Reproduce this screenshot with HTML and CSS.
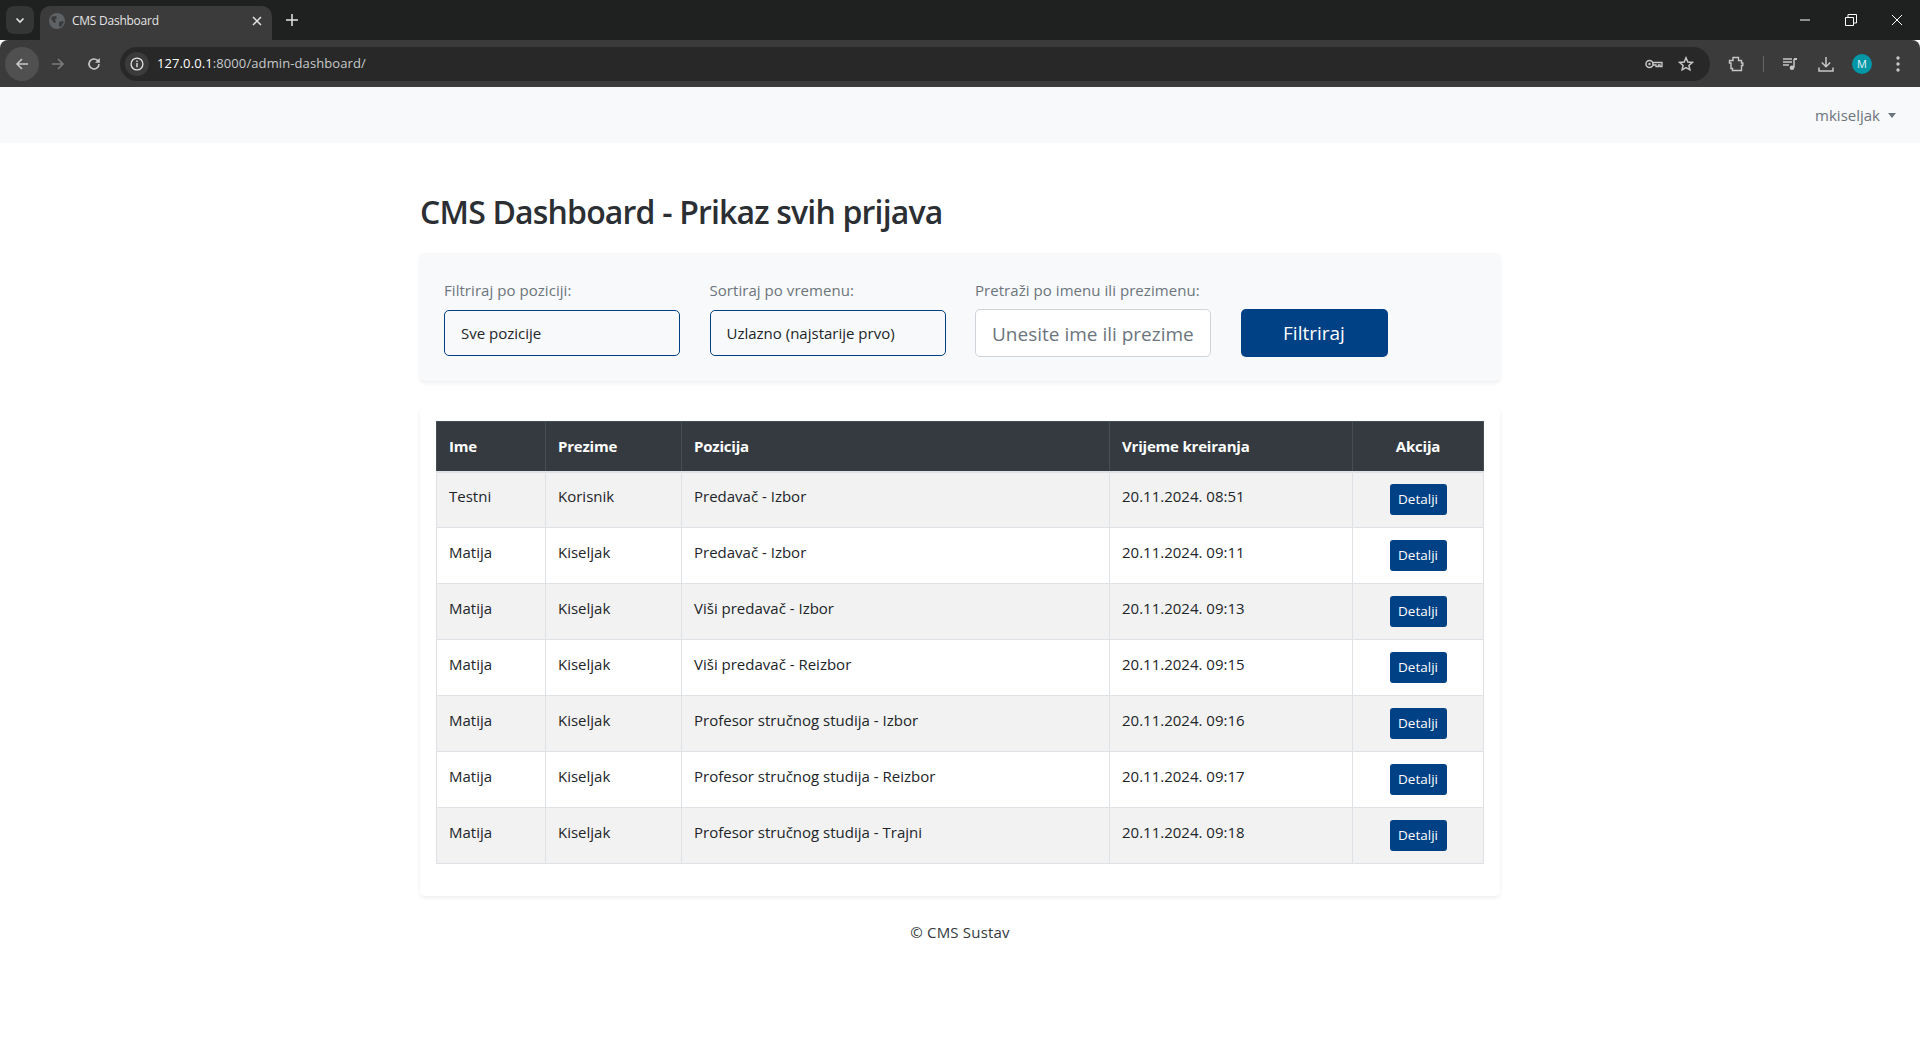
FILE: index.html

```html
<!DOCTYPE html>
<html lang="hr">
<head>
    <meta charset="UTF-8">
    <title>CMS Dashboard</title>
    <link rel="stylesheet" href="styles.css">
</head>
<body>
<div class="browser">
    <div class="tabbar">
        <div class="tab-search">
            <svg width="12" height="12" viewBox="0 0 12 12"><path d="M2.5 4.500 6 8l3.500-3.500" fill="none" stroke="#e3e3e3" stroke-width="1.600"/></svg>
        </div>
        <div class="tab">
            <svg class="favicon" width="16" height="16" viewBox="0 0 16 16"><circle cx="8" cy="8" r="8" fill="#5f6265"/><path d="M3 3.500 7 3l1 2-2 1.500 1 2.500-2 1-3-4zM10 9l3.500-1 1.500 1-3 5-2-1z" fill="#3b3b3b"/></svg>
            <span class="tab-title">CMS Dashboard</span>
            <svg class="tab-close" width="10" height="10" viewBox="0 0 10 10"><path d="M1 1l8 8M9 1l-8 8" stroke="#e3e3e3" stroke-width="1.500"/></svg>
        </div>
        <svg class="new-tab" width="14" height="14" viewBox="0 0 14 14"><path d="M7 1v12M1 7h12" stroke="#e3e3e3" stroke-width="1.500"/></svg>
        <div class="window-btns">
            <svg width="12" height="12" viewBox="0 0 12 12"><path d="M1 6h10" stroke="#fff" stroke-width="1"/></svg>
            <svg width="12" height="12" viewBox="0 0 12 12"><path d="M.5 3.500h8v8h-8zM3 3.500V.5h8.500V9H8.500" fill="none" stroke="#fff" stroke-width="1"/></svg>
            <svg width="12" height="12" viewBox="0 0 12 12"><path d="M1 1l10 10M11 1 1 11" stroke="#fff" stroke-width="1"/></svg>
        </div>
    </div>
    <div class="toolbar">
        <div class="nav-btn nav-back">
            <svg width="16" height="16" viewBox="0 0 16 16"><path d="M14 8H3M8 3 3 8l5 5" fill="none" stroke="#c7c7c7" stroke-width="1.600"/></svg>
        </div>
        <div class="nav-btn">
            <svg width="16" height="16" viewBox="0 0 16 16"><path d="M2 8h11M8 3l5 5-5 5" fill="none" stroke="#7b7b7b" stroke-width="1.600"/></svg>
        </div>
        <div class="nav-btn">
            <svg width="16" height="16" viewBox="0 0 16 16"><path d="M13 8a5 5 0 1 1-1.500-3.600L13 6" fill="none" stroke="#c7c7c7" stroke-width="1.600"/><path d="M13.800 2v4.800H9z" fill="#c7c7c7"/></svg>
        </div>
        <div class="omnibox">
            <div class="site-info">
                <svg width="14" height="14" viewBox="0 0 14 14"><circle cx="7" cy="7" r="5.900" fill="none" stroke="#e3e3e3" stroke-width="1.300"/><path d="M7 6v4.200M7 3.600v1.300" stroke="#e3e3e3" stroke-width="1.400"/></svg>
            </div>
            <span class="url"><span class="url-host">127.0.0.1</span>:8000/admin-dashboard/</span>
            <svg class="omni-key" width="18" height="12" viewBox="0 0 18 12"><circle cx="4.500" cy="6" r="3.500" fill="none" stroke="#c7c7c7" stroke-width="1.500"/><circle cx="4.500" cy="6" r="1.200" fill="#c7c7c7"/><path d="M8 4.500h9v4h-2V7h-1.500v1.500H11V7H8" fill="none" stroke="#c7c7c7" stroke-width="1.300"/></svg>
            <svg class="omni-star" width="16" height="16" viewBox="0 0 16 16"><path d="m8 1.800 1.800 4.200 4.500.4-3.400 3 1 4.400L8 11.500l-3.900 2.300 1-4.400-3.400-3 4.500-.4z" fill="none" stroke="#c7c7c7" stroke-width="1.500"/></svg>
        </div>
        <svg class="tool-icon tool-ext" width="16" height="16" viewBox="0 0 16 16"><path d="M1.500 4.500H5V1.500h5.500v3h3V7h1.300v2.500h-1.300v5h-9v-2H3V7H1.500z" fill="none" stroke="#c7c7c7" stroke-width="1.400"/></svg>
        <div class="tool-sep"></div>
        <svg class="tool-icon tool-media" width="16" height="16" viewBox="0 0 16 16"><path d="M1 3h9M1 6h9M1 9h6" stroke="#c7c7c7" stroke-width="1.400"/><path d="M12 3v8.500" stroke="#c7c7c7" stroke-width="1.500"/><path d="M12 2h3v2h-3z" fill="#c7c7c7"/><circle cx="10" cy="11.800" r="2.300" fill="#c7c7c7"/></svg>
        <svg class="tool-icon tool-dl" width="16" height="16" viewBox="0 0 16 16"><path d="M8 1v9.500M3.800 6.500 8 10.700l4.200-4.200M1 11.500V15h14v-3.500" fill="none" stroke="#c7c7c7" stroke-width="1.500"/></svg>
        <div class="avatar">M</div>
        <svg class="tool-icon tool-menu" width="4" height="16" viewBox="0 0 4 16"><circle cx="2" cy="2" r="1.700" fill="#c7c7c7"/><circle cx="2" cy="8" r="1.700" fill="#c7c7c7"/><circle cx="2" cy="14" r="1.700" fill="#c7c7c7"/></svg>
    </div>
</div>

<nav class="navbar">
    <a class="user-link" href="#">mkiseljak<span class="caret"></span></a>
</nav>

<main class="container">
    <h1>CMS Dashboard - Prikaz svih prijava</h1>

    <form class="filter-card">
        <div class="field">
            <label>Filtriraj po poziciji:</label>
            <div class="select-box">Sve pozicije</div>
        </div>
        <div class="field">
            <label>Sortiraj po vremenu:</label>
            <div class="select-box">Uzlazno (najstarije prvo)</div>
        </div>
        <div class="field">
            <label>Pretraži po imenu ili prezimenu:</label>
            <input class="search-input" type="text" placeholder="Unesite ime ili prezime">
        </div>
        <button class="btn-filter" type="button">Filtriraj</button>
    </form>

    <div class="table-card">
        <table>
            <thead>
                <tr>
                    <th class="col-ime">Ime</th>
                    <th class="col-prezime">Prezime</th>
                    <th class="col-pozicija">Pozicija</th>
                    <th class="col-vrijeme">Vrijeme kreiranja</th>
                    <th class="col-akcija">Akcija</th>
                </tr>
            </thead>
            <tbody>
                <tr><td>Testni</td><td>Korisnik</td><td>Predavač - Izbor</td><td>20.11.2024. 08:51</td><td class="cell-action"><a class="btn-details" href="#">Detalji</a></td></tr>
                <tr><td>Matija</td><td>Kiseljak</td><td>Predavač - Izbor</td><td>20.11.2024. 09:11</td><td class="cell-action"><a class="btn-details" href="#">Detalji</a></td></tr>
                <tr><td>Matija</td><td>Kiseljak</td><td>Viši predavač - Izbor</td><td>20.11.2024. 09:13</td><td class="cell-action"><a class="btn-details" href="#">Detalji</a></td></tr>
                <tr><td>Matija</td><td>Kiseljak</td><td>Viši predavač - Reizbor</td><td>20.11.2024. 09:15</td><td class="cell-action"><a class="btn-details" href="#">Detalji</a></td></tr>
                <tr><td>Matija</td><td>Kiseljak</td><td>Profesor stručnog studija - Izbor</td><td>20.11.2024. 09:16</td><td class="cell-action"><a class="btn-details" href="#">Detalji</a></td></tr>
                <tr><td>Matija</td><td>Kiseljak</td><td>Profesor stručnog studija - Reizbor</td><td>20.11.2024. 09:17</td><td class="cell-action"><a class="btn-details" href="#">Detalji</a></td></tr>
                <tr><td>Matija</td><td>Kiseljak</td><td>Profesor stručnog studija - Trajni</td><td>20.11.2024. 09:18</td><td class="cell-action"><a class="btn-details" href="#">Detalji</a></td></tr>
            </tbody>
        </table>
    </div>

    <footer class="page-footer">© CMS Sustav</footer>
</main>
</body>
</html>
```

FILE: styles.css

```css
* {
    box-sizing: border-box;
}

html, body {
    margin: 0;
    padding: 0;
}

body {
    height: 1037px;
    overflow: hidden;
    background: #fff;
    color: #212529;
    font-family: "Open Sans", "Noto Sans", sans-serif;
    font-size: 15px;
}

/* browser chrome */
.browser {
    height: 87px;
}

.tabbar {
    height: 40px;
    background: #1f2020;
    display: flex;
    align-items: flex-start;
}

.tab-search {
    width: 28px;
    height: 28px;
    margin: 6px 0 0 6px;
    background: #343535;
    border-radius: 8px;
    display: flex;
    align-items: center;
    justify-content: center;
}

.tab {
    width: 232px;
    height: 34px;
    margin: 6px 0 0 6px;
    background: #3b3b3b;
    border-radius: 10px 10px 0 0;
    display: flex;
    align-items: center;
    padding: 0 10px 5px 9px;
}

.favicon {
    flex: none;
}

.tab-title {
    flex: 1;
    margin-left: 7px;
    color: #e3e3e3;
    font-size: 12px;
    letter-spacing: -0.25px;
}

.new-tab {
    margin: 13px 0 0 13px;
}

.window-btns {
    margin-left: auto;
    margin-top: 14px;
    display: flex;
    gap: 34px;
    padding-right: 17px;
}

.toolbar {
    height: 47px;
    background: #3b3b3b;
    border-radius: 8px 8px 0 0;
    display: flex;
    align-items: center;
    padding-left: 5px;
}

.nav-btn {
    width: 34px;
    height: 34px;
    margin-right: 2px;
    border-radius: 50%;
    display: flex;
    align-items: center;
    justify-content: center;
}

.nav-back {
    background: #505050;
}

.omnibox {
    width: 1590px;
    height: 34px;
    margin-left: 7px;
    background: #282828;
    border-radius: 17px;
    display: flex;
    align-items: center;
    padding-left: 5px;
}

.site-info {
    width: 24px;
    height: 24px;
    background: #3b3b3b;
    border-radius: 50%;
    display: flex;
    align-items: center;
    justify-content: center;
}

.url {
    margin-left: 8px;
    padding-bottom: 1px;
    color: #c7cacc;
    font-size: 13px;
    letter-spacing: 0.1px;
}

.url-host {
    color: #fff;
}

.omni-key {
    margin-left: auto;
}

.omni-star {
    margin: 0 16px 0 15px;
}

.tool-ext {
    margin-left: 18px;
}

.tool-sep {
    width: 1px;
    height: 16px;
    margin-left: 19px;
    background: #666;
}

.tool-media {
    margin-left: 18px;
}

.tool-dl {
    margin-left: 20px;
}

.avatar {
    width: 20px;
    height: 20px;
    margin-left: 18px;
    border-radius: 50%;
    background: #0097a7;
    color: #e8f4f6;
    font-size: 11px;
    display: flex;
    align-items: center;
    justify-content: center;
}

.tool-menu {
    margin-left: 24px;
}

/* page */
.navbar {
    height: 56px;
    background: #f8f9fa;
    display: flex;
    align-items: center;
    justify-content: flex-end;
    padding-right: 24px;
}

.user-link {
    color: #6c757d;
    text-decoration: none;
    font-size: 15px;
    display: flex;
    align-items: center;
}

.caret {
    width: 0;
    height: 0;
    margin-left: 8px;
    border-top: 5px solid #6c757d;
    border-left: 4.500px solid transparent;
    border-right: 4.500px solid transparent;
}

.container {
    width: 1080px;
    margin: 0 auto;
}

h1 {
    margin: 46px 0 18px;
    font-size: 32px;
    font-weight: 600;
    line-height: 46px;
    color: #2b2f33;
    letter-spacing: -0.82px;
}

.filter-card {
    height: 128px;
    background: #f8f9fa;
    border-radius: 5px;
    box-shadow: 0 2px 4px rgba(0, 0, 0, .07);
    display: flex;
    align-items: flex-end;
    padding: 0 24px 24px;
    gap: 29.500px;
}

.field {
    width: 236px;
    display: flex;
    flex-direction: column;
    gap: 8px;
}

.field label {
    color: #6c757d;
    font-size: 15px;
    line-height: 22px;
    letter-spacing: 0.05px;
}

.select-box {
    height: 46px;
    margin: 1px 0;
    padding-bottom: 1px;
    background: #f8f9fa;
    border: 1px solid #004085;
    border-radius: 5px;
    display: flex;
    align-items: center;
    padding-left: 16px;
    color: #212529;
    font-size: 15px;
}

.search-input {
    width: 100%;
    height: 48px;
    background: #fff;
    border: 1px solid #ced4da;
    border-radius: 5px;
    padding: 2px 16px 0;
    font-family: "Open Sans", sans-serif;
    font-size: 19px;
}

.search-input::placeholder {
    color: #6c757d;
    opacity: 1;
}

.btn-filter {
    width: 147px;
    height: 48px;
    background: #004085;
    color: #fff;
    border: 0;
    border-radius: 5px;
    font-family: "Open Sans", sans-serif;
    font-size: 19px;
}

.table-card {
    margin-top: 26px;
    height: 489px;
    padding: 14px 16px 0;
    background: #fff;
    border-radius: 5px;
    box-shadow: 0 2px 4px rgba(0, 0, 0, .07);
}

table {
    width: 1048px;
    table-layout: fixed;
    border-collapse: collapse;
}

th {
    height: 50px;
    background: #343a40;
    color: #fff;
    font-weight: 700;
    text-align: left;
    padding: 0 12px;
    border: 1px solid #454d55;
    border-bottom: 2px solid #dee2e6;
    letter-spacing: -0.2px;
}

td {
    height: 56px;
    padding: 12px 12px 20px;
    border: 1px solid #dee2e6;
}

tbody tr:nth-child(odd) {
    background: #f2f2f2;
}

.col-ime { width: 109px; }
.col-prezime { width: 136px; }
.col-pozicija { width: 428px; }
.col-vrijeme { width: 243px; }
.col-akcija {
    text-align: center;
}

.cell-action {
    text-align: center;
    padding: 0;
}

.btn-details {
    display: inline-block;
    width: 57px;
    height: 31px;
    line-height: 31px;
    background: #004085;
    color: #fff;
    border-radius: 3px;
    font-size: 13.500px;
    text-decoration: none;
    vertical-align: middle;
}

.page-footer {
    margin-top: 26px;
    text-align: center;
    font-size: 15px;
    letter-spacing: 0.2px;
    color: #343a40;
}
```
